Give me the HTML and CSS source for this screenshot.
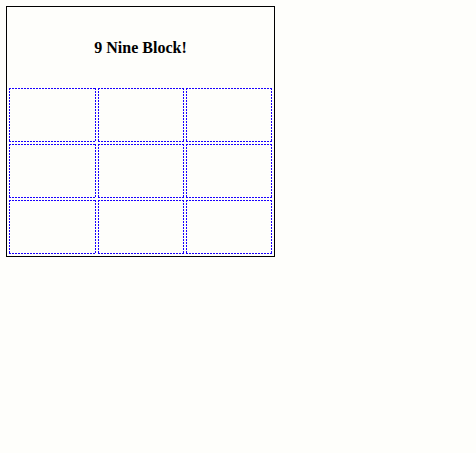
FILE: index.html
```html
<!DOCTYPE html>
<html lang="en">
<head>
<meta charset="UTF-8">
<meta name="viewport" content="width=device-width, initial-scale=1.0">
<title>9 Nine Block</title>
<link rel="stylesheet" href="styles.css">
</head>
<body>

<div class="board">
  <div class="board-title">9 Nine Block!</div>
  <div class="block"></div>
  <div class="block"></div>
  <div class="block"></div>
  <div class="block"></div>
  <div class="block"></div>
  <div class="block"></div>
  <div class="block"></div>
  <div class="block"></div>
  <div class="block"></div>
</div>

</body>
</html>
```

FILE: styles.css
```css
body {
  margin: 6px;
  background: #fefefb;
  font-family: "Liberation Serif", "Times New Roman", serif;
  color: #000;
}

.board {
  display: grid;
  grid-template-columns: 87px 86px 86px;
  grid-template-rows: 77px 54px 54px 54px;
  gap: 2px;
  padding: 2px;
  width: 263px;
  border: 1px solid #000;
}

.board-title {
  grid-column: 1 / 4;
  display: flex;
  justify-content: center;
  align-items: center;
  font-size: 16px;
  font-weight: bold;
}

/* dotted blue edge, drawn with gradients so the dots are 2px on / 1px off */
.block {
  background:
    repeating-linear-gradient(90deg, #1a00ff 0 2px, transparent 2px 3px) top / 100% 1px no-repeat,
    repeating-linear-gradient(90deg, #1a00ff 0 2px, transparent 2px 3px) bottom / 100% 1px no-repeat,
    repeating-linear-gradient(180deg, #1a00ff 0 2px, transparent 2px 3px) left / 1px 100% no-repeat,
    repeating-linear-gradient(180deg, #1a00ff 0 2px, transparent 2px 3px) right / 1px 100% no-repeat;
}
```
